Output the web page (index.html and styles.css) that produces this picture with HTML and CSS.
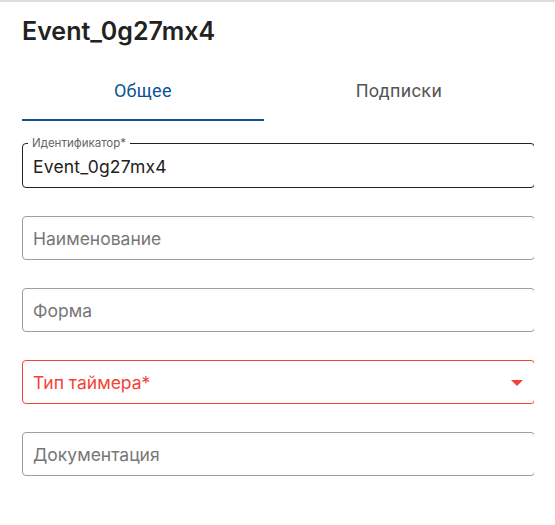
FILE: index.html
```html
<!DOCTYPE html>
<html>
<head>
<meta charset="utf-8">
<link rel="stylesheet" href="styles.css">
</head>
<body>
<div class="page">
  <h1 class="title">Event_0g27mx4</h1>
  <div class="tabs">
    <div class="tab active">Общее</div>
    <div class="tab">Подписки</div>
  </div>
  <div class="fields">
    <div class="field filled">
      <fieldset class="outline"><legend>Идентификатор*</legend></fieldset>
      <span class="value">Event_0g27mx4</span>
    </div>
    <div class="field">
      <span class="placeholder">Наименование</span>
    </div>
    <div class="field">
      <span class="placeholder">Форма</span>
    </div>
    <div class="field error">
      <span class="placeholder">Тип таймера*</span>
      <svg class="arrow" width="12" height="6" viewBox="0 0 12 6"><path d="M0 0h12L6 6z" fill="#f44336"/></svg>
    </div>
    <div class="field">
      <span class="placeholder">Документация</span>
    </div>
  </div>
</div>
</body>
</html>
```

FILE: styles.css
```css
html, body {
  margin: 0;
  padding: 0;
  background: #fff;
}
body {
  border-top: 2px solid #dcdcdc;
  font-family: Roboto, "Noto Sans", sans-serif;
}
.page {
  width: 512px;
  margin-left: 22px;
  overflow: hidden;
}
.title {
  margin: 0;
  padding-top: 14px;
  font-family: Inter, "Noto Sans", sans-serif;
  font-size: 25px;
  line-height: 30px;
  font-weight: 600;
  color: #222;
}
.tabs {
  display: flex;
  margin-top: 26px;
  height: 49px;
}
.tab {
  flex: 1 1 auto;
  text-align: center;
  font-size: 18px;
  line-height: 22px;
  letter-spacing: 0.35px;
  padding-top: 8px;
  color: #555;
  box-sizing: border-box;
}
.tab.active {
  color: #0b5394;
  border-bottom: 2px solid #0b5394;
}
.fields {
  display: flex;
  flex-direction: column;
  gap: 28px;
  margin-top: 23px;
}
.field {
  position: relative;
  width: 513px;
  height: 44px;
  box-sizing: border-box;
  border: 1px solid #9e9e9e;
  border-radius: 4px;
  display: flex;
  align-items: center;
  padding-left: 10px;
  font-family: Inter, "Noto Sans", sans-serif;
  font-size: 17.5px;
}
.field.filled {
  border: none;
  padding-left: 11px;
}
.outline {
  position: absolute;
  inset: -6px 0 0 0;
  margin: 0;
  padding: 0 6px;
  border: 1px solid #222;
  border-radius: 4px;
  pointer-events: none;
}
.outline legend {
  padding: 0 4px;
  font-size: 11.5px;
  line-height: 11px;
  color: #666;
  margin-left: -1px;
}
.value {
  color: #222;
  padding-top: 1px;
  letter-spacing: 0.2px;
}
.placeholder {
  color: #777;
}
.field.error {
  border-color: #f44336;
}
.field.error .placeholder {
  color: #f44336;
}
.arrow {
  position: absolute;
  left: 488px;
  top: 19px;
}
```
